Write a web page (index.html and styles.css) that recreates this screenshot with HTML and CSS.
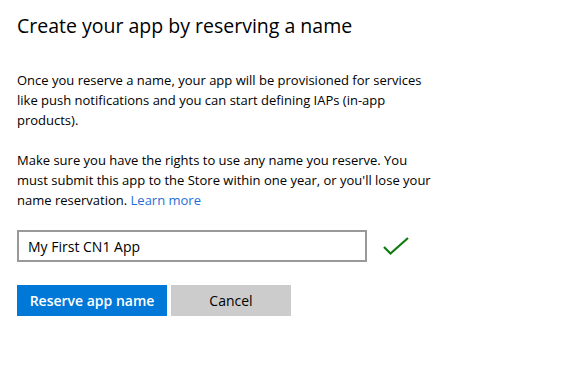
FILE: index.html
```html
<!DOCTYPE html>
<html lang="en">

<head>
    <meta charset="UTF-8">
    <meta name="viewport" content="width=device-width, initial-scale=1.0">
    <title>Reserve app name</title>
    <link rel="stylesheet" href="styles.css">
</head>

<body>
    <div class="dialog">
        <h1 class="title">Create your app by reserving a name</h1>
        <p class="text">Once you reserve a name, your app will be provisioned for services like push notifications and you can start defining IAPs (in-app products).</p>
        <p class="text">Make sure you have the rights to use any name you reserve. You must submit this app to the Store within one year, or you'll lose your name reservation. <a class="link" href="#">Learn more</a></p>
        <div class="field">
            <input class="name" type="text" value="My First CN1 App">
            <svg class="check" width="28" height="20" viewBox="0 0 28 20">
                <path d="M2 11 L8.5 17.5 L26 2" fill="none" stroke="#107c10" stroke-width="2.2"/>
            </svg>
        </div>
        <div class="buttons">
            <button class="btn primary">Reserve app name</button>
            <button class="btn cancel">Cancel</button>
        </div>
    </div>
</body>

</html>
```

FILE: styles.css
```css
* {
    margin: 0;
    padding: 0;
    box-sizing: border-box;
}

body {
    background: #fff;
    font-family: "Open Sans", "Noto Sans", sans-serif;
    color: #000;
}

.dialog {
    padding: 11px 17px 0;
}

.title {
    font-size: 19.5px;
    font-weight: 400;
    line-height: 30px;
    margin-bottom: 29px;
}

.text {
    width: 419px;
    font-size: 13px;
    line-height: 20px;
    margin-bottom: 20px;
}

.link {
    color: #1f6fd6;
    text-decoration: none;
}

.field {
    display: flex;
    align-items: center;
    gap: 15px;
    margin-top: 18px;
}

.name {
    width: 350px;
    height: 32px;
    border: 2px solid #999;
    padding: 0 9px;
    font-family: inherit;
    font-size: 14px;
    color: #000;
    outline: none;
}

.buttons {
    display: flex;
    gap: 4px;
    margin-top: 23px;
}

.btn {
    height: 31px;
    border: none;
    font-family: inherit;
    font-size: 14px;
}

.primary {
    width: 150px;
    background: #0078d7;
    color: #fff;
    font-weight: 600;
}

.cancel {
    width: 120px;
    background: #ccc;
    color: #000;
}
```
